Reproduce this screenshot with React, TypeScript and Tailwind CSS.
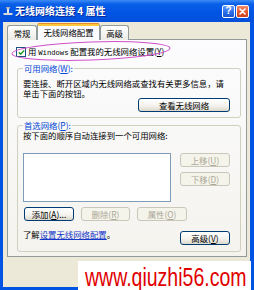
import React from "react";

type BtnProps = { children: React.ReactNode; disabled?: boolean; className?: string };

const Btn = ({ children, disabled, className = "" }: BtnProps) => (
  <div
    className={`flex h-[14px] shrink-0 items-center justify-center rounded-[3px] border leading-none ${
      disabled
        ? "border-[#C9C7BA] bg-[#F5F4EA] text-[#ACA899]"
        : "border-[#003C74] bg-[linear-gradient(to_bottom,#FFFFFF_0%,#F4F3EE_55%,#DCD8CC_100%)] text-black"
    } ${className}`}
  >
    {children}
  </div>
);

const U = ({ children }: { children: React.ReactNode }) => <span className="underline">{children}</span>;

export default function App() {
  return (
    <div className="relative h-[290px] w-[254px] overflow-hidden bg-[#0054E3] font-['Noto_Sans_CJK_SC','Noto_Sans',sans-serif] text-[8.4px] text-black">
      {/* Title bar */}
      <div className="flex h-[22px] items-center bg-[linear-gradient(to_bottom,#3D8BF7_0%,#0A5FE8_18%,#0054E3_60%,#0550DA_100%)] pl-[3px] pr-[5px]">
        <svg width="10" height="10" viewBox="0 0 10 10" className="shrink-0">
          <rect x="4" y="1" width="2" height="7" fill="#E8E8E8" />
          <rect x="0.5" y="7" width="9" height="2" fill="#D8D8D8" />
          <rect x="3" y="1" width="4" height="1.5" fill="#B0B0B0" />
        </svg>
        <span className="ml-[2px] whitespace-nowrap text-[10px] font-bold leading-none text-white [text-shadow:1px_1px_0_#0A2A9C]">
          无线网络连接 4 属性
        </span>
        <div className="ml-auto flex gap-[1px]">
          <div className="flex h-[13px] w-[13px] items-center justify-center rounded-[2px] border border-white bg-[linear-gradient(to_bottom,#5A9CFF,#2A6BE8_60%,#1B55D0)] font-['Liberation_Sans',sans-serif] text-[10px] font-bold leading-none text-white">
            ?
          </div>
          <div className="flex h-[13px] w-[13px] items-center justify-center rounded-[2px] border border-white bg-[linear-gradient(to_bottom,#F08A6A,#E35A30_55%,#C8401E)]">
            <svg width="7" height="7" viewBox="0 0 7 7">
              <path d="M1 1 L6 6 M6 1 L1 6" stroke="white" strokeWidth="1.6" strokeLinecap="round" />
            </svg>
          </div>
        </div>
      </div>

      {/* Dialog body */}
      <div className="ml-[3px] mr-[4px] flex h-[265px] flex-col bg-[#ECE9D8] pl-[4px] pr-[3px] pt-[1px]">
        {/* Tabs */}
        <div className="relative z-10 flex h-[17px] items-start">
          <div className="mt-[2px] flex h-[15px] w-[30px] items-center justify-center rounded-t-[3px] border border-b-0 border-[#919B9C] bg-[linear-gradient(to_bottom,#FFFFFF,#ECEBE6)]">
            常规
          </div>
          <div className="flex h-[17px] w-[63px] flex-col rounded-t-[3px] border-x border-[#919B9C] bg-[#FCFCFE]">
            <div className="h-[1px] rounded-t-[3px] bg-[#E68B2C]" />
            <div className="h-[2px] bg-[#FFC73C]" />
            <div className="flex flex-1 items-center justify-center pb-[1px]">无线网络配置</div>
          </div>
          <div className="mt-[2px] flex h-[15px] w-[29px] items-center justify-center rounded-t-[3px] border border-b-0 border-[#919B9C] bg-[linear-gradient(to_bottom,#FFFFFF,#ECEBE6)]">
            高级
          </div>
        </div>

        {/* Panel */}
        <div className="-mt-[1px] flex h-[218px] flex-col border border-[#919B9C] bg-[linear-gradient(to_bottom,#FCFCFE,#F4F3EE)] pl-[8px] pr-[5px] pt-[7px]">
          {/* checkbox row */}
          <div className="flex h-[10px] items-center">
            <div className="flex h-[10px] w-[10px] items-center justify-center border border-[#1C5180] bg-white">
              <svg width="7" height="7" viewBox="0 0 7 7">
                <path d="M0.8 3.4 L2.6 5.2 L6.2 1.4" fill="none" stroke="#21A121" strokeWidth="1.5" />
              </svg>
            </div>
            <span className="ml-[2px] whitespace-nowrap leading-none">
              用 <span className="font-['Liberation_Mono',monospace] text-[7.2px]">Windows</span> 配置我的无线网络设置(<U>Y</U>)
            </span>
          </div>

          {/* Group 1 */}
          <fieldset className="ml-[1px] mt-[6px] rounded-[3px] border border-[#D0D0BF] px-[5px] pb-[5px]">
            <legend className="px-[1px] leading-[10px] text-[#0046D5]">
              可用网络(<U>W</U>):
            </legend>
            <div className="mt-[5px] whitespace-nowrap leading-[10px]">
              要连接、断开区域内无线网络或查找有关更多信息，请
              <br />
              单击下面的按钮。
            </div>
            <div className="flex justify-end pr-[5px]">
              <Btn className="w-[92px]">查看无线网络</Btn>
            </div>
          </fieldset>

          {/* Group 2 */}
          <fieldset className="ml-[1px] mt-[2px] rounded-[3px] border border-[#D0D0BF] px-[5px] pb-[6px]">
            <legend className="px-[1px] leading-[10px] text-[#0046D5]">
              首选网络(<U>P</U>):
            </legend>
            <div className="whitespace-nowrap leading-[10px]">按下面的顺序自动连接到一个可用网络:</div>
            <div className="mt-[13px] flex items-start">
              <div className="h-[49px] w-[148px] border border-[#7F9DB9] bg-white" />
              <div className="ml-[9px] flex flex-col gap-[5px]">
                <Btn disabled className="w-[50px]">
                  上移(<U>U</U>)
                </Btn>
                <Btn disabled className="w-[50px]">
                  下移(<U>D</U>)
                </Btn>
              </div>
            </div>
            <div className="ml-[1px] mt-[5px] flex gap-[7px]">
              <Btn className="w-[50px]">
                添加(<U>A</U>)...
              </Btn>
              <Btn disabled className="w-[49px]">
                删除(<U>R</U>)
              </Btn>
              <Btn disabled className="w-[50px]">
                属性(<U>O</U>)
              </Btn>
            </div>
            <div className="mt-[8px] flex items-start justify-between pr-[5px]">
              <span className="whitespace-nowrap leading-[10px]">
                了解<span className="text-[#1638C8] underline">设置无线网络配置</span>。
              </span>
              <Btn className="mt-[2px] w-[50px]">
                高级(<U>V</U>)
              </Btn>
            </div>
          </fieldset>
        </div>
      </div>

      {/* Pink annotation ellipse */}
      <svg className="pointer-events-none absolute left-0 top-0" width="254" height="290">
        <ellipse cx="91" cy="51" rx="79" ry="9" fill="none" stroke="#D050C8" strokeWidth="1" transform="rotate(-2 91 51)" />
      </svg>

      {/* Watermark */}
      <div className="absolute bottom-0 left-[78px] flex h-[29px] w-[173px] items-end overflow-hidden bg-white pl-[7px]">
        <span className="inline-block origin-left scale-x-[0.78] whitespace-nowrap font-['Liberation_Sans',sans-serif] text-[25px] leading-[25px] text-[#E00000]">
          www.qiuzhi56.com
        </span>
      </div>
    </div>
  );
}
